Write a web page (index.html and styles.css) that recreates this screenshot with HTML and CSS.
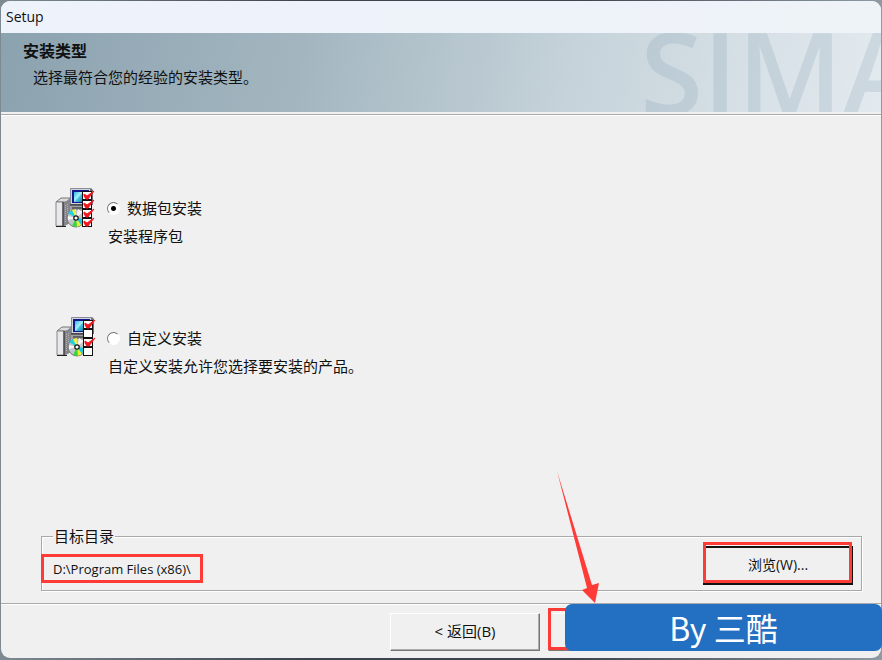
FILE: index.html
```html
<!DOCTYPE html>
<html lang="zh-CN">
<head>
  <meta charset="UTF-8">
  <meta name="viewport" content="width=device-width, initial-scale=1">
  <title>Setup</title>
  <link rel="stylesheet" href="styles.css">
</head>
<body>

  <!-- shared parts of the two option icons -->
  <svg class="defs" width="0" height="0" aria-hidden="true">
    <defs>
      <linearGradient id="screen" x1="0" y1="0" x2="1" y2="1">
        <stop offset="0" stop-color="#35b5dc"/>
        <stop offset="0.45" stop-color="#a4f4fa"/>
        <stop offset="0.55" stop-color="#4cc4e0"/>
        <stop offset="1" stop-color="#1878a8"/>
      </linearGradient>
      <g id="computer">
        <path d="M15 0h21l2 2v15H15z" fill="#707078"/>
        <path d="M15 0h20v16H15z" fill="#d4d4dc"/>
        <path d="M15.500 16V.5H36" fill="none" stroke="#8c8c98"/>
        <path d="M17 2h17v13H17z" fill="#10188c"/>
        <path d="M19 4h9v10h-9z" fill="url(#screen)"/>
        <path d="M15 17h14v5H15z" fill="#a0a0a4"/>
        <path d="M15 17h14M17 20h11" stroke="#222" fill="none"/>
        <path d="M1 14l5-4h9l-3 4z" fill="#dcdcdc" stroke="#777"/>
        <path d="M8 15l7-4v24l-7 4z" fill="#84848a"/>
        <path d="M1 14h7v24H1z" fill="#e8e8ea" stroke="#88888c"/>
        <path d="M8 14v24M1 38.500h10" stroke="#222"/>
        <path d="M10.500 17v18M12.500 16v17" stroke="#b4b4b8" stroke-dasharray="1 1"/>
        <circle cx="21" cy="30" r="9" fill="#c2c5c8" stroke="#77777c"/>
        <path d="M21 30L13 25l4-3z" fill="#19d5e4"/>
        <path d="M21 30l-4-8 4-1z" fill="#eef04a"/>
        <path d="M21 30l2-9 5 3z" fill="#f4f4f4"/>
        <path d="M21 30l8 1-3 6z" fill="#18c8d8"/>
        <path d="M21 30l5 7-4 2z" fill="#eaf02a"/>
        <path d="M21 30l1 9-5-1z" fill="#35d63e"/>
        <path d="M21 30l-8 2v-4z" fill="#f6f6f6"/>
        <circle cx="21" cy="30" r="2.2" fill="#fff" stroke="#111" stroke-width="1.2"/>
        <path d="M27 3h10v36H27z" fill="#111"/>
      </g>
      <path id="slot" d="M28 0h8v7h-8z" fill="#fff"/>
      <g id="tick">
        <path d="M28 0h8v7h-8z" fill="#fff"/>
        <path d="M29 2l3 2 7-5-6 8h-2l-2-3z" fill="#f01820" stroke="#f01820" stroke-width="1"/>
      </g>
    </defs>
  </svg>

  <div class="window">
    <div class="titlebar">Setup</div>

    <header class="banner">
      <span class="brand" aria-hidden="true">SIMA</span>
      <h1>安装类型</h1>
      <p>选择最符合您的经验的安装类型。</p>
    </header>

    <main class="content">
      <div class="options">
        <div class="option">
          <svg class="option-icon" viewBox="0 -1 40 40" aria-hidden="true">
            <use href="#computer"/>
            <use href="#tick" y="4"/>
            <use href="#tick" y="13"/>
            <use href="#tick" y="22"/>
            <use href="#tick" y="31"/>
          </svg>
          <div class="option-text">
            <label><input type="radio" name="type" checked>数据包安装</label>
            <p>安装程序包</p>
          </div>
        </div>

        <div class="option">
          <svg class="option-icon" viewBox="-1 0 40 40" aria-hidden="true">
            <use href="#computer"/>
            <use href="#tick" y="4"/>
            <use href="#slot" y="13"/>
            <use href="#tick" y="22"/>
            <use href="#slot" y="31"/>
          </svg>
          <div class="option-text">
            <label><input type="radio" name="type">自定义安装</label>
            <p>自定义安装允许您选择要安装的产品。</p>
          </div>
        </div>
      </div>

      <fieldset class="target">
        <legend>目标目录</legend>
        <div class="target-row">
          <span class="path">D:\Program Files (x86)\</span>
          <div class="marked marked-browse">
            <button type="button" class="btn btn-default">浏览(W)...</button>
          </div>
        </div>
      </fieldset>
    </main>

    <footer class="actions">
      <button type="button" class="btn">&lt; 返回(B)</button>
      <div class="marked marked-next">
        <button type="button" class="btn" aria-label="下一步"></button>
        <svg class="arrow" viewBox="0 0 44 132" aria-hidden="true">
          <path d="M1 0L36 114l7-2-4 20-13-13 5-2z" fill="#ff3b38"/>
        </svg>
      </div>
      <button type="button" class="btn" aria-label="取消"></button>
      <div class="badge">By 三酷</div>
    </footer>
  </div>

</body>
</html>
```

FILE: styles.css
```css
* {
  box-sizing: border-box;
}

body {
  margin: 0;
  padding: 1px 1px 2px;
  min-height: 100vh;
  display: flex;
  background: linear-gradient(90deg, #7d8a91, #3d424c 35%, #3d424c 65%, #8e9aa3);
  font-family: "Open Sans", "Noto Sans CJK SC", sans-serif;
  font-size: 15px;
  color: #111;
}

h1,
p {
  margin: 0;
}

.defs {
  position: absolute;
}

.window {
  flex: 1;
  display: flex;
  flex-direction: column;
  background: #f0f0f0;
  border-radius: 9px;
}

.titlebar {
  height: 32px;
  padding-left: 5px;
  line-height: 32px;
  font-size: 14px;
  background: linear-gradient(90deg, #eef2fb, #eef3f8);
  border-radius: 9px 9px 0 0;
}

/* header */
.banner {
  position: relative;
  height: 79px;
  padding: 6px 22px;
  overflow: hidden;
  background: linear-gradient(100deg, #8ba2af, #a3b6c0 34%, #c6d3da 65%, #e3eaef);
}

.banner h1 {
  font-size: 16px;
  line-height: 24px;
}

.banner p {
  padding-left: 10px;
  line-height: 28px;
}

.brand {
  position: absolute;
  top: 0;
  right: -37px;
  font-size: 114px;
  font-weight: 600;
  line-height: 75px;
  color: rgba(120, 150, 170, 0.2);
}

/* body */
.content {
  flex: 1;
  display: flex;
  flex-direction: column;
  justify-content: space-between;
  margin-top: 2px;
  padding: 72px 19px 12px 40px;
  border-top: 1px solid #aaa;
  box-shadow: inset 0 1px #fff;
}

.options {
  display: flex;
  flex-direction: column;
  gap: 67px;
  padding-left: 14px;
}

.option {
  display: flex;
  gap: 12px;
}

.option-icon {
  width: 40px;
  height: 40px;
  overflow: visible;
}

.option-text {
  padding-top: 7px;
  line-height: 28px;
}

.option label {
  display: flex;
  align-items: center;
  gap: 7px;
}

.option p {
  padding-left: 1px;
}

.option input {
  appearance: none;
  width: 13px;
  height: 13px;
  margin: 0;
  border: 1px solid;
  border-color: #777 #fff #fff #777;
  border-radius: 50%;
  background: #fff;
}

.option input:checked {
  background: radial-gradient(circle, #000 2px, #fff 3px);
}

.target {
  margin: 0;
  min-width: 0;
  padding: 0 8px 5px 11px;
  border: 1px solid #a8a8a8;
  box-shadow: 1px 1px #fff, inset 1px 1px #fff;
}

.target legend {
  padding: 0 1px;
  line-height: 20px;
  background: #f0f0f0;
}

.target-row {
  display: flex;
  justify-content: space-between;
  align-items: center;
}

.path {
  height: 29px;
  margin: 6px 0 0 -12px;
  padding: 0 9px;
  border: 3px solid #ff3b38;
  line-height: 24px;
  font-size: 13px;
}

.btn {
  width: 150px;
  height: 38px;
  padding: 0 0 4px;
  border: 1px solid;
  border-color: #fff #777 #777 #fff;
  background: #f0f0f0;
  box-shadow: inset -1px -1px #aaa;
  font: inherit;
  color: #111;
}

.marked .btn {
  display: block;
}

.btn-default {
  height: 39px;
  border-width: 2px;
  border-color: #111;
  font-size: 14px;
}

/* red frames around the buttons to press */
.marked {
  position: relative;
}

.marked::after {
  content: "";
  position: absolute;
  border: 3px solid #ff3b38;
}

.marked-browse::after {
  inset: -4px 1px 2px 0;
}

.marked-next::after {
  inset: -5px 0 1px 0;
}

.arrow {
  position: absolute;
  left: 8px;
  bottom: 48px;
  width: 44px;
  height: 132px;
}

/* footer */
.actions {
  position: relative;
  display: flex;
  align-items: flex-start;
  justify-content: flex-end;
  gap: 8px;
  padding: 9px 25px 7px;
  border-top: 1px solid #aaa;
  box-shadow: inset 0 1px #fff;
}

.badge {
  position: absolute;
  top: 0;
  right: -1px;
  width: 317px;
  height: 47px;
  border-radius: 7px;
  background: #236fc1;
  color: #fff;
  font-family: "Noto Sans CJK SC", sans-serif;
  font-size: 32px;
  line-height: 46px;
  text-align: center;
}
```
